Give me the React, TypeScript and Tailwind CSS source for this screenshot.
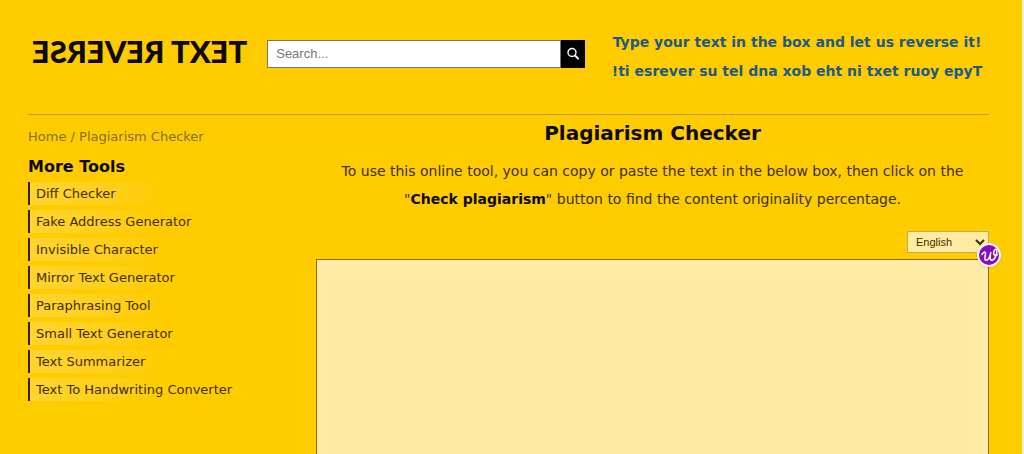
const tools = [
  "Diff Checker",
  "Fake Address Generator",
  "Invisible Character",
  "Mirror Text Generator",
  "Paraphrasing Tool",
  "Small Text Generator",
  "Text Summarizer",
  "Text To Handwriting Converter",
];

function Header() {
  return (
    <header className="flex items-start border-b border-[#bf9a3a] pt-7 pb-7">
      <a
        href="#"
        className="mt-[3px] ml-1 shrink-0 -scale-x-100 whitespace-nowrap font-[Lato,sans-serif] text-[31px] leading-10 font-black text-[#0d0a00]"
      >
        TEXT REVERSE
      </a>

      <form className="mt-3 ml-5 flex h-7 min-w-0 flex-1">
        <input
          type="text"
          aria-label="Search"
          placeholder="Search..."
          className="min-w-0 flex-1 border border-[#767676] bg-white px-2 font-['Liberation_Sans',sans-serif] text-[13px] placeholder:text-[#757575] focus:outline-none"
        />
        <button
          type="submit"
          aria-label="Search"
          className="flex w-6 items-center justify-center bg-black text-white"
        >
          <svg
            viewBox="0 0 14 14"
            className="size-3.5"
            fill="none"
            stroke="currentColor"
            strokeLinecap="round"
          >
            <circle cx="6" cy="5.500" r="4" strokeWidth="1.4" />
            <path d="M9 8.500l3.200 3.200" strokeWidth="1.8" />
          </svg>
        </button>
      </form>

      <div className="ml-5 w-[384px] shrink-0 text-center text-sm leading-[29px] font-bold text-[#1e5a84]">
        <p>Type your text in the box and let us reverse it!</p>
        <p>!ti esrever su tel dna xob eht ni txet ruoy epyT</p>
      </div>
    </header>
  );
}

function Sidebar() {
  return (
    <aside className="w-[260px] shrink-0 pt-3">
      <nav className="text-[13px] leading-5 text-[#857030]">
        <a href="#">Home</a> / <a href="#">Plagiarism Checker</a>
      </nav>
      <h2 className="mt-2 text-base leading-6 font-bold text-[#0d0a00]">
        More Tools
      </h2>
      <ul className="mt-[3px] space-y-[5px]">
        {tools.map((tool) => (
          <li
            key={tool}
            className="border-l-2 border-[#2b2200] bg-linear-to-r from-[#ffd42e] to-[#ffcc00] to-50% pl-1.5"
          >
            <a href="#" className="block text-[13px] leading-[23px] text-[#3d3000]">
              {tool}
            </a>
          </li>
        ))}
      </ul>
    </aside>
  );
}

function Checker() {
  return (
    <main className="ml-7 flex min-w-0 flex-1 flex-col">
      <h1 className="mt-1 text-center text-xl leading-7 font-bold text-[#0d0a00]">
        Plagiarism Checker
      </h1>
      <p className="mt-2.5 px-4 text-center text-sm leading-7 text-[#3d3000]">
        To use this online tool, you can copy or paste the text in the below
        box, then click on the <span>"</span>
        <b className="text-[#0d0a00]">Check plagiarism</b>
        <span>" button to find the content originality percentage.</span>
      </p>
      <div className="relative mt-[18px] self-end">
        <select
          aria-label="Language"
          className="block h-[22px] w-[82px] border border-[#c3ab5c] bg-[#ffeba3] pl-1 font-['Liberation_Sans',sans-serif] text-[11px] text-[#3d3000]"
        >
          <option>English</option>
        </select>
        <button
          type="button"
          aria-label="Writing assistant"
          className="absolute -right-3 -bottom-3.5 flex size-6 items-center justify-center rounded-full border-2 border-[#fdf3fb] bg-[#8510b8] text-white shadow"
        >
          <svg
            viewBox="1 1 17 17"
            className="size-5 shrink-0"
            fill="none"
            stroke="currentColor"
            strokeWidth="1.3"
            strokeLinecap="round"
            strokeLinejoin="round"
          >
            <path d="M3.500 9c1-2 3-2.800 3-.8 0 2-1.500 5.800.5 5.800 2.200 0 3.500-4 4-6.500-.5 2.500-1.200 6.500.8 6.500 2.700 0 5-6.500 4.200-8.700-.8-1.800-2.700.7-2.500 2.900.1 1.500 1.500 2 3 1.200" />
          </svg>
        </button>
      </div>
      <textarea
        aria-label="Text to check"
        className="mt-1.5 block h-[300px] w-full resize-none border border-[#8c6d10] bg-[#ffeba3] p-2 text-sm focus:outline-none"
      />
    </main>
  );
}

export default function App() {
  return (
    <div className="h-screen overflow-hidden border-r-2 border-[#fbf3dc] bg-[#ffcc00] pr-[33px] pl-7 font-['DejaVu_Sans',Verdana,sans-serif]">
      <Header />
      <div className="flex">
        <Sidebar />
        <Checker />
      </div>
    </div>
  );
}
